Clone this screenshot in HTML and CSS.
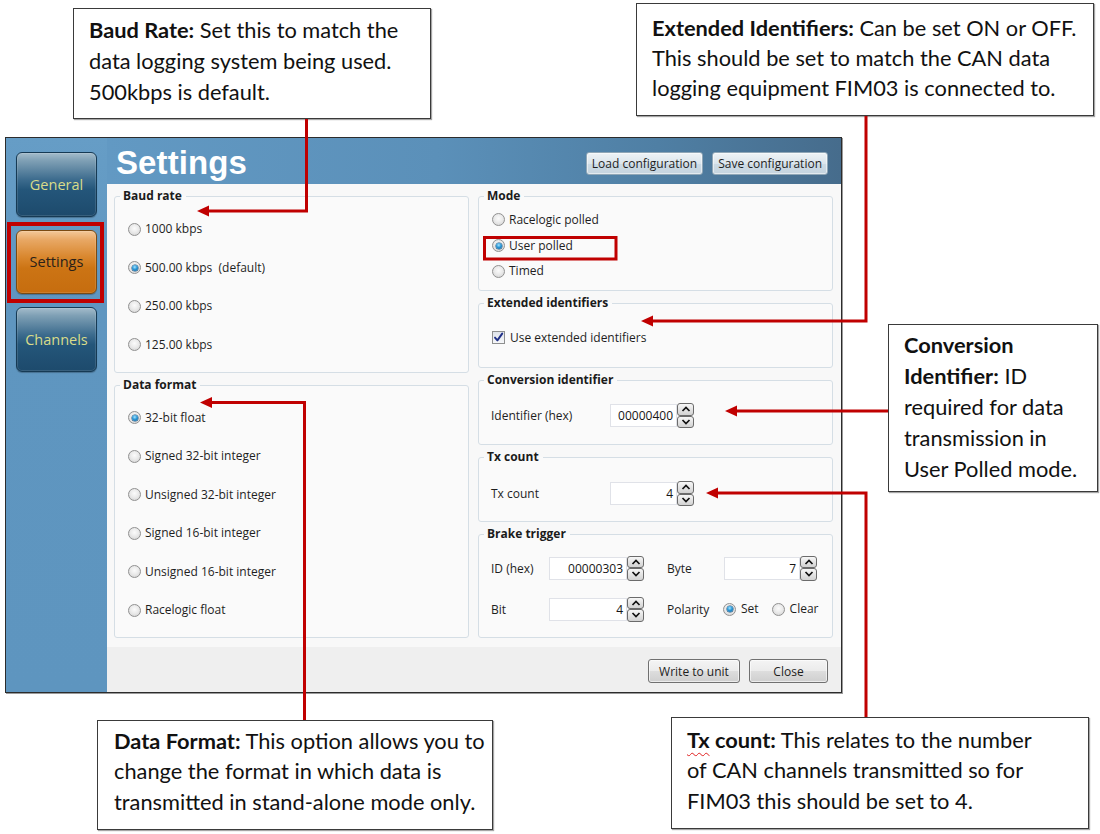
FILE: index.html
```html
<!DOCTYPE html>
<html lang="en">
<head>
<meta charset="utf-8">
<title>Settings</title>
<link rel="stylesheet" href="styles.css">
</head>
<body>
<div class="page">

  <div class="window">
    <nav class="sidebar">
      <div class="navbtn">General</div>
      <div class="navbtn active">Settings</div>
      <div class="navbtn">Channels</div>
    </nav>

    <div class="main">
      <header class="header">
        <h1 class="title">Settings</h1>
        <div class="hbtns">
          <button class="hbtn">Load configuration</button>
          <button class="hbtn">Save configuration</button>
        </div>
      </header>

      <div class="content">
        <div class="col">
          <fieldset class="group g-baud">
            <legend>Baud rate</legend>
            <div class="opts opts-wide o-baud">
              <div class="opt"><span class="radio"></span>1000 kbps</div>
              <div class="opt"><span class="radio on"></span>500.00 kbps&nbsp;&nbsp;(default)</div>
              <div class="opt"><span class="radio"></span>250.00 kbps</div>
              <div class="opt"><span class="radio"></span>125.00 kbps</div>
            </div>
          </fieldset>

          <fieldset class="group g-data">
            <legend>Data format</legend>
            <div class="opts opts-wide o-data">
              <div class="opt"><span class="radio on"></span>32-bit float</div>
              <div class="opt"><span class="radio"></span>Signed 32-bit integer</div>
              <div class="opt"><span class="radio"></span>Unsigned 32-bit integer</div>
              <div class="opt"><span class="radio"></span>Signed 16-bit integer</div>
              <div class="opt"><span class="radio"></span>Unsigned 16-bit integer</div>
              <div class="opt"><span class="radio"></span>Racelogic float</div>
            </div>
          </fieldset>
        </div>

        <div class="col">
          <fieldset class="group g-mode">
            <legend>Mode</legend>
            <div class="opts opts-tight o-mode">
              <div class="opt"><span class="radio"></span>Racelogic polled</div>
              <div class="opt"><span class="radio on"></span>User polled</div>
              <div class="opt"><span class="radio"></span>Timed</div>
            </div>
          </fieldset>

          <fieldset class="group g-ext">
            <legend>Extended identifiers</legend>
            <div class="opt o-ext">
              <span class="check"><svg width="11" height="11" viewBox="0 0 11 11"><path d="M2 5.6 L4.4 8.4 L9.2 1.6" fill="none" stroke="#1f2f86" stroke-width="1.9" stroke-linecap="round" stroke-linejoin="round"/></svg></span>Use extended identifiers
            </div>
          </fieldset>

          <fieldset class="group g-conv">
            <legend>Conversion identifier</legend>
            <div class="frow o-conv">
              <span class="flabel">Identifier (hex)</span>
              <div class="spin">
                <div class="field f-conv">00000400</div>
                <div class="arrows">
                  <span class="arr"><svg width="10" height="6" viewBox="0 0 10 6"><path d="M1.5 5 L5 1.5 L8.5 5" fill="none" stroke="#111" stroke-width="1.7"/></svg></span>
                  <span class="arr"><svg width="10" height="6" viewBox="0 0 10 6"><path d="M1.5 1 L5 4.5 L8.5 1" fill="none" stroke="#111" stroke-width="1.7"/></svg></span>
                </div>
              </div>
            </div>
          </fieldset>

          <fieldset class="group g-tx">
            <legend>Tx count</legend>
            <div class="frow o-tx">
              <span class="flabel">Tx count</span>
              <div class="spin">
                <div class="field f-conv">4</div>
                <div class="arrows">
                  <span class="arr"><svg width="10" height="6" viewBox="0 0 10 6"><path d="M1.5 5 L5 1.5 L8.5 5" fill="none" stroke="#111" stroke-width="1.7"/></svg></span>
                  <span class="arr"><svg width="10" height="6" viewBox="0 0 10 6"><path d="M1.5 1 L5 4.5 L8.5 1" fill="none" stroke="#111" stroke-width="1.7"/></svg></span>
                </div>
              </div>
            </div>
          </fieldset>

          <fieldset class="group g-brake">
            <legend>Brake trigger</legend>
            <div class="brake">
              <span class="blabel">ID (hex)</span>
              <div class="spin">
                <div class="field f-id">00000303</div>
                <div class="arrows">
                  <span class="arr"><svg width="10" height="6" viewBox="0 0 10 6"><path d="M1.5 5 L5 1.5 L8.5 5" fill="none" stroke="#111" stroke-width="1.7"/></svg></span>
                  <span class="arr"><svg width="10" height="6" viewBox="0 0 10 6"><path d="M1.5 1 L5 4.5 L8.5 1" fill="none" stroke="#111" stroke-width="1.7"/></svg></span>
                </div>
              </div>
              <span class="blabel indent">Byte</span>
              <div class="spin">
                <div class="field f-byte">7</div>
                <div class="arrows">
                  <span class="arr"><svg width="10" height="6" viewBox="0 0 10 6"><path d="M1.5 5 L5 1.5 L8.5 5" fill="none" stroke="#111" stroke-width="1.7"/></svg></span>
                  <span class="arr"><svg width="10" height="6" viewBox="0 0 10 6"><path d="M1.5 1 L5 4.5 L8.5 1" fill="none" stroke="#111" stroke-width="1.7"/></svg></span>
                </div>
              </div>

              <span class="blabel">Bit</span>
              <div class="spin">
                <div class="field f-id">4</div>
                <div class="arrows">
                  <span class="arr"><svg width="10" height="6" viewBox="0 0 10 6"><path d="M1.5 5 L5 1.5 L8.5 5" fill="none" stroke="#111" stroke-width="1.7"/></svg></span>
                  <span class="arr"><svg width="10" height="6" viewBox="0 0 10 6"><path d="M1.5 1 L5 4.5 L8.5 1" fill="none" stroke="#111" stroke-width="1.7"/></svg></span>
                </div>
              </div>
              <span class="blabel indent">Polarity</span>
              <div class="pol">
                <div class="opt"><span class="radio on"></span>Set</div>
                <div class="opt"><span class="radio"></span>Clear</div>
              </div>
            </div>
          </fieldset>
        </div>
      </div>

      <footer class="footer">
        <button class="fbtn b-write">Write to unit</button>
        <button class="fbtn b-close">Close</button>
      </footer>
    </div>
  </div>

  <div class="callout c-baud">
    <b>Baud Rate:</b> Set this to match the<br>
    data logging system being used.<br>
    500kbps is default.
  </div>

  <div class="callout c-ext">
    <b>Extended Identifiers:</b> Can be set ON or OFF.<br>
    This should be set to match the CAN data<br>
    logging equipment FIM03 is connected to.
  </div>

  <div class="callout c-conv">
    <b>Conversion<br>Identifier:</b> ID<br>
    required for data<br>
    transmission in<br>
    User Polled mode.
  </div>

  <div class="callout c-data">
    <b>Data Format:</b> This option allows you to<br>
    change the format in which data is<br>
    transmitted in stand-alone mode only.
  </div>

  <div class="callout c-tx">
    <b><span class="spell">Tx</span> count:</b> This relates to the number<br>
    of CAN channels transmitted so for<br>
    FIM03 this should be set to 4.
  </div>

  <svg class="annot" width="1100" height="834" viewBox="0 0 1100 834">
    <g fill="none" stroke="#c00000" stroke-width="3">
      <path d="M306.5 119 V211 H207"/>
      <path d="M866 116 V321 H651"/>
      <path d="M888 411 H735"/>
      <path d="M866 717 V493 H716"/>
      <path d="M304.5 720 V402.5 H210"/>
      <rect x="9" y="224" width="93" height="77" stroke-width="4"/>
      <rect x="484.5" y="237.5" width="131.5" height="21.5"/>
    </g>
    <g fill="#c00000">
      <polygon points="197,211 209,205.5 209,216.5"/>
      <polygon points="641,321 653,315.5 653,326.5"/>
      <polygon points="725,411 737,405.5 737,416.5"/>
      <polygon points="706,493 718,487.5 718,498.5"/>
      <polygon points="200,402.5 212,397 212,408"/>
    </g>
  </svg>

</div>
</body>
</html>
```

FILE: styles.css
```css
* { box-sizing: border-box; }

html, body {
  margin: 0;
  padding: 0;
}

body {
  background: #ffffff;
  font-family: "Open Sans", "Noto Sans", sans-serif;
  color: #1c1c1c;
}

.page {
  position: relative;
  width: 1100px;
  height: 834px;
  overflow: hidden;
  background: #ffffff;
}

/* ---------- application window ---------- */
.window {
  position: absolute;
  left: 5px;
  top: 137px;
  width: 837px;
  height: 556px;
  border: 1px solid #2c2c2c;
  box-shadow: 1px 1px 0 #9a9a9a;
  display: flex;
  background: #f9f9f9;
}

.sidebar {
  width: 101px;
  flex: none;
  background: linear-gradient(#669dc6, #5f96c0 30%, #5e95bf);
  display: flex;
  flex-direction: column;
  gap: 13px;
  padding: 14px 0 0 10px;
}

.navbtn {
  width: 81px;
  height: 64.5px;
  border-radius: 6px;
  border: 1px solid #163a54;
  background: linear-gradient(#a4bccb 0%, #7fa0b5 12%, #3d6c8e 42%, #24567a 58%, #1d4a6c 100%);
  box-shadow: inset 0 0 0 1px rgba(255,255,255,0.12), 0 1px 1px rgba(0,0,0,0.25);
  display: flex;
  align-items: center;
  justify-content: center;
  font-size: 14.5px;
  color: #d9dc8a;
}

.navbtn.active {
  border-color: #7a4a12;
  background: linear-gradient(#f3c899 0%, #e8a865 14%, #d9872e 42%, #cc7414 60%, #c66d0f 100%);
  color: #2a2118;
}

.main {
  flex: 1;
  display: flex;
  flex-direction: column;
  min-width: 0;
}

.header {
  height: 46px;
  flex: none;
  background: linear-gradient(90deg, #6299c3 0%, #5b90b9 45%, #4f7fa4 75%, #466c8c 100%);
  display: flex;
  justify-content: space-between;
  align-items: flex-start;
  padding: 0 13px 0 9px;
}

.title {
  margin: 0;
  padding-top: 7px;
  font-family: "Liberation Sans", Arial, sans-serif;
  font-weight: bold;
  font-size: 33px;
  line-height: 36px;
  color: #ffffff;
  letter-spacing: 0.1px;
}

.hbtns {
  display: flex;
  gap: 9px;
  margin-top: 14px;
}

.hbtn {
  height: 23px;
  padding: 0 5px;
  font-family: "Open Sans", sans-serif;
  font-size: 12px;
  color: #1e1e1e;
  border: 1px solid #8fa6b6;
  border-radius: 3px;
  background: linear-gradient(#eef3f6, #dbe5ec 50%, #cddbe5 51%, #c5d4df);
  box-shadow: inset 0 0 0 1px rgba(255,255,255,0.5);
}

.content {
  flex: 1;
  display: flex;
  gap: 9px;
  padding: 4px 8px 0 7px;
  background: #f8f8f8;
}

.col {
  width: 356px;
  display: flex;
  flex-direction: column;
  gap: 4px;
}

.group {
  margin: 0;
  padding: 0 5px;
  border: 1px solid #d5dee5;
  border-radius: 3px;
  background: #fafafa;
  min-width: 0;
}

.group legend {
  padding: 0 4px 0 3px;
  font-weight: bold;
  font-size: 12px;
  line-height: 16px;
  color: #1b1b1b;
}

.g-baud { height: 185px; }
.g-data { height: 261px; }
.g-mode { height: 103px; }
.g-ext { height: 73px; }
.g-conv { height: 73px; }
.g-tx { height: 73px; }
.g-brake { height: 112px; }

.opts {
  display: flex;
  flex-direction: column;
}

.opt {
  display: flex;
  align-items: center;
  font-size: 12px;
  line-height: 16px;
  color: #1e1e1e;
  white-space: nowrap;
}

.opts .opt { padding-left: 8px; }
.opts-wide .opt { height: 38.5px; }
.opts-tight .opt { height: 25.8px; }

.o-baud { margin-top: 6px; }
.o-data { margin-top: 5.5px; }
.o-mode { margin-top: 3px; }

.radio {
  position: relative;
  flex: none;
  width: 13px;
  height: 13px;
  margin-right: 4px;
  border-radius: 50%;
  border: 1px solid #919191;
  background: radial-gradient(circle at 50% 40%, #fbfbfb 0%, #ebebeb 45%, #cfcfcf 100%);
}

.radio.on::after {
  content: "";
  position: absolute;
  left: 2.5px;
  top: 2.5px;
  width: 6px;
  height: 6px;
  border-radius: 50%;
  background: radial-gradient(circle at 45% 35%, #a6e4ff 0%, #2b97d6 45%, #0b5e98 100%);
  box-shadow: 0 0 0 0.5px #1d4f78;
}

.o-ext {
  margin-top: 14.5px;
  padding-left: 8px;
  height: 24px;
}

.check {
  flex: none;
  width: 13px;
  height: 13px;
  margin-right: 5px;
  border: 1px solid #8e8f8f;
  background: linear-gradient(#dfe3ea, #f6f7f9);
  display: flex;
  align-items: center;
  justify-content: center;
}

.frow {
  display: flex;
  align-items: center;
  padding-left: 7px;
  font-size: 12px;
  color: #1e1e1e;
}

.o-conv { margin-top: 15px; }
.o-tx { margin-top: 16px; }

.flabel {
  width: 119px;
  flex: none;
}

.spin {
  display: flex;
  align-items: center;
}

.field {
  height: 23px;
  border: 1px solid #e0e2e8;
  background: #ffffff;
  text-align: right;
  padding-right: 3px;
  font-size: 12px;
  line-height: 21px;
  color: #161616;
}

.f-conv { width: 67px; }
.f-id { width: 78px; }
.f-byte { width: 76px; }

.arrows {
  display: flex;
  flex-direction: column;
  width: 17px;
  flex: none;
}

.arr {
  height: 12.5px;
  border: 1px solid #6b6b6b;
  border-radius: 3px;
  background: linear-gradient(#f7f7f7, #e4e4e4 50%, #d2d2d2);
  display: flex;
  align-items: center;
  justify-content: center;
}

.brake {
  margin-top: 14.5px;
  padding-left: 7px;
  display: grid;
  grid-template-columns: 58px 95px 80px auto;
  grid-auto-rows: 23px;
  row-gap: 18px;
  align-items: center;
  font-size: 12px;
  color: #1e1e1e;
}

.blabel.indent { padding-left: 23px; }

.pol {
  display: flex;
  gap: 13px;
  margin-left: -1px;
}

.pol .radio { margin-right: 5px; }

.footer {
  height: 45px;
  flex: none;
  background: #efefef;
  display: flex;
  justify-content: flex-end;
  gap: 9px;
  padding: 12px 13px 0 0;
}

.fbtn {
  height: 24px;
  font-family: "Open Sans", sans-serif;
  font-size: 12px;
  color: #1e1e1e;
  border: 1px solid #707070;
  border-radius: 3px;
  background: linear-gradient(#f4f4f4, #ebebeb 50%, #dddddd 51%, #cfcfcf);
  box-shadow: inset 0 0 0 1px rgba(255,255,255,0.6);
  padding: 0;
}

.b-write { width: 92px; }
.b-close { width: 79px; }

/* ---------- callouts ---------- */
.callout {
  position: absolute;
  background: #ffffff;
  border: 1px solid #3a3a3a;
  box-shadow: 1px 1px 1px rgba(0,0,0,0.35);
  padding-left: 15px;
  font-family: Lato, "Open Sans", sans-serif;
  font-size: 21.8px;
  color: #111111;
  white-space: nowrap;
}

.callout b { font-weight: bold; }

.c-baud {
  left: 73px; top: 8px; width: 358px; height: 111px;
  line-height: 31px; padding-top: 5px;
}

.c-ext {
  left: 636px; top: 3px; width: 458px; height: 113px;
  line-height: 30px; padding-top: 9px;
}

.c-conv {
  left: 888px; top: 324px; width: 210px; height: 168px;
  line-height: 31px; padding-top: 4px;
}

.c-data {
  left: 97px; top: 720px; width: 396px; height: 110px;
  line-height: 30.7px; padding-top: 4.5px;
  padding-left: 16px;
}

.c-tx {
  left: 671px; top: 717px; width: 418px; height: 112px;
  line-height: 30.5px; padding-top: 6.5px;
}

.spell {
  text-decoration: underline wavy #e02020;
  text-decoration-thickness: 1px;
  text-underline-offset: 4px;
}

.annot {
  position: absolute;
  left: 0;
  top: 0;
  pointer-events: none;
}
```
